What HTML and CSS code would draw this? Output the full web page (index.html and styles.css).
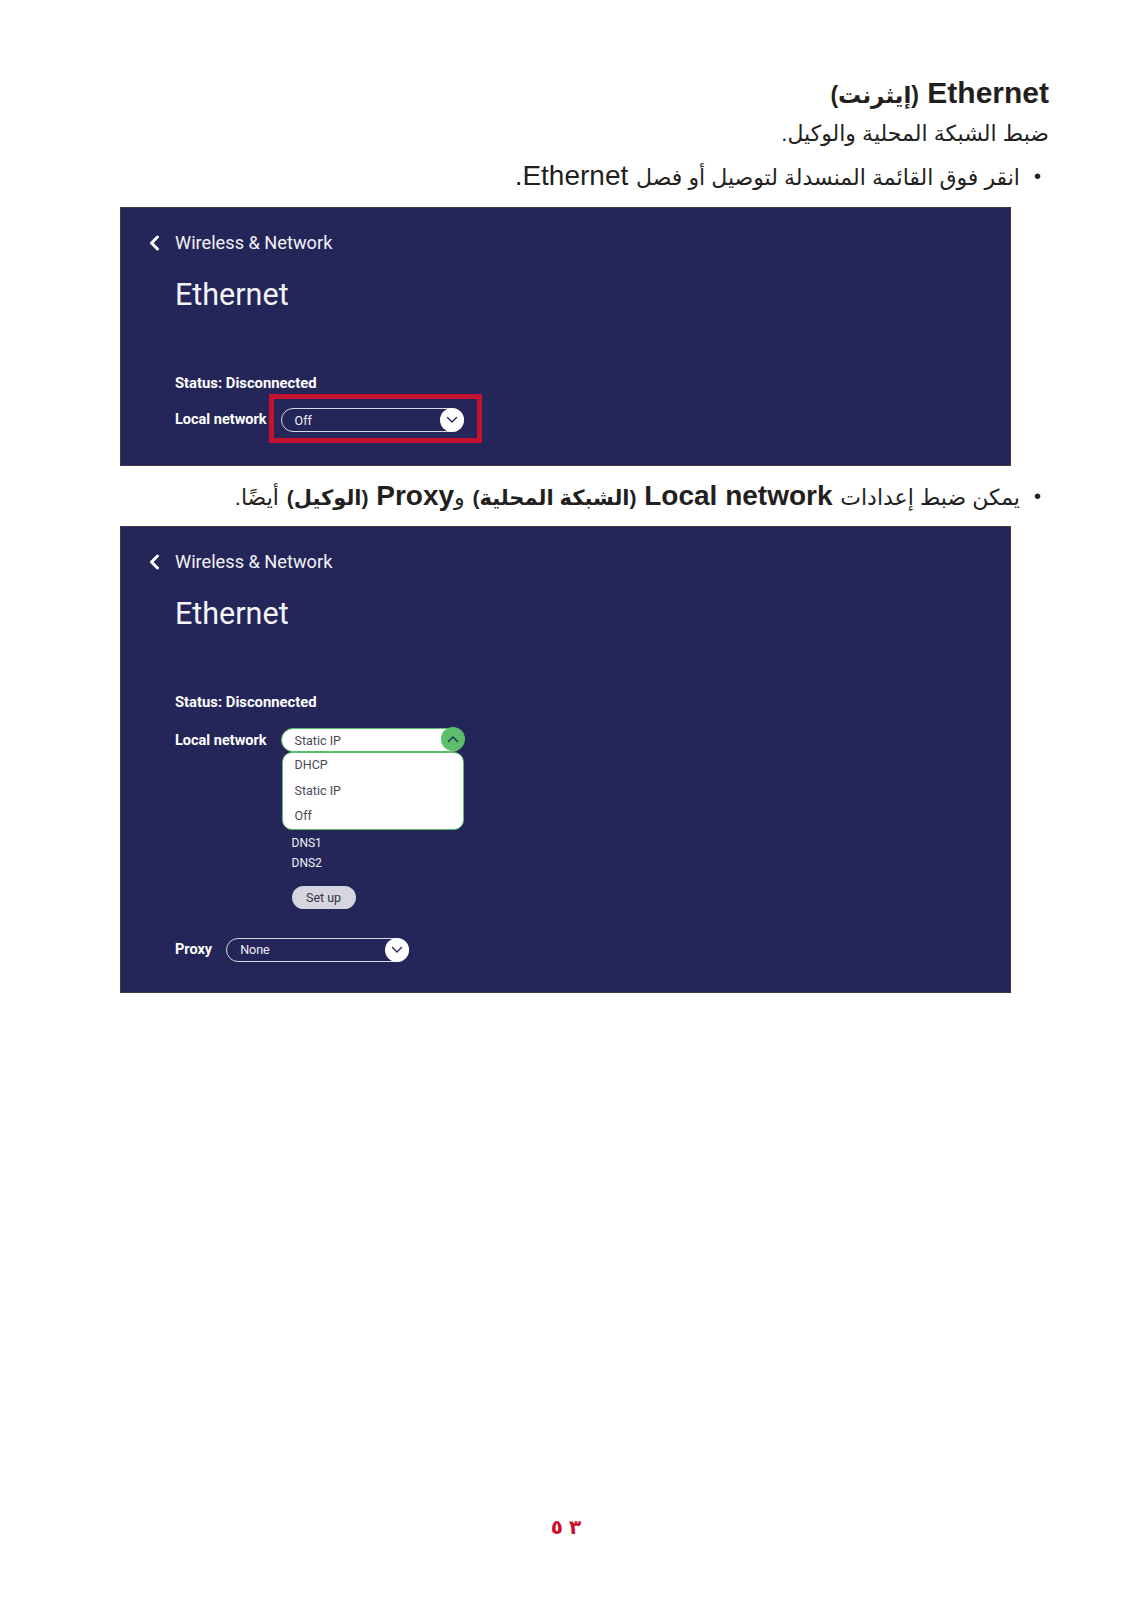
FILE: index.html
```html
<!DOCTYPE html>
<html lang="ar">
<head>
<meta charset="utf-8">
<title>Ethernet</title>
<link rel="stylesheet" href="styles.css">
</head>
<body>
<div class="page">
  <div class="doc" dir="rtl">
    <h1 class="heading">Ethernet <span class="ar-b">(إيثرنت)</span></h1>
    <p class="intro"><span class="ar">ضبط الشبكة المحلية والوكيل.</span></p>
    <div class="bullet"><span class="dot">•</span><span class="txt"><span class="ar">انقر فوق القائمة المنسدلة لتوصيل أو فصل</span> Ethernet.</span></div>
  </div>

  <section class="panel">
    <div class="topbar">
      <svg class="back" width="12" height="16" viewBox="0 0 12 16"><path d="M9.5 2 L3.5 8 L9.5 14" fill="none" stroke="#fff" stroke-width="3" stroke-linecap="round" stroke-linejoin="round"/></svg>
      <span class="crumb">Wireless &amp; Network</span>
    </div>
    <div class="body">
      <div class="title">Ethernet</div>
      <div class="status">Status: Disconnected</div>
      <div class="row">
        <span class="label">Local network</span>
        <div class="select-wrap">
          <div class="select">
            <span class="value">Off</span>
            <span class="knob"><svg width="12" height="8" viewBox="0 0 12 8"><path d="M1.5 1.5 L6 6 L10.5 1.5" fill="none" stroke="#23265a" stroke-width="1.4" stroke-linecap="round" stroke-linejoin="round"/></svg></span>
          </div>
          <div class="highlight"></div>
        </div>
      </div>
    </div>
  </section>

  <div class="doc" dir="rtl">
    <div class="bullet second"><span class="dot">•</span><span class="txt"><span class="ar">يمكن ضبط إعدادات</span> <b>Local network</b> <b class="ar-b">(الشبكة المحلية)</b> <span class="ar">و</span><b>Proxy</b> <b class="ar-b">(الوكيل)</b> <span class="ar">أيضًا.</span></span></div>
  </div>

  <section class="panel tall">
    <div class="topbar">
      <svg class="back" width="12" height="16" viewBox="0 0 12 16"><path d="M9.5 2 L3.5 8 L9.5 14" fill="none" stroke="#fff" stroke-width="3" stroke-linecap="round" stroke-linejoin="round"/></svg>
      <span class="crumb">Wireless &amp; Network</span>
    </div>
    <div class="body">
      <div class="title">Ethernet</div>
      <div class="status">Status: Disconnected</div>
      <div class="row top">
        <span class="label">Local network</span>
        <div class="open-col">
          <div class="select open">
            <span class="value">Static IP</span>
            <span class="knob green"><svg width="12" height="8" viewBox="0 0 12 8"><path d="M1.5 6.5 L6 2 L10.5 6.5" fill="none" stroke="#23265a" stroke-width="1.3" stroke-linecap="round" stroke-linejoin="round"/></svg></span>
          </div>
          <ul class="menu">
            <li>DHCP</li>
            <li>Static IP</li>
            <li>Off</li>
          </ul>
          <div class="dns first">DNS1</div>
          <div class="dns">DNS2</div>
          <div class="setup">Set up</div>
        </div>
      </div>
      <div class="row proxy">
        <span class="label">Proxy</span>
        <div class="select">
          <span class="value">None</span>
          <span class="knob"><svg width="12" height="8" viewBox="0 0 12 8"><path d="M1.5 1.5 L6 6 L10.5 1.5" fill="none" stroke="#23265a" stroke-width="1.4" stroke-linecap="round" stroke-linejoin="round"/></svg></span>
        </div>
      </div>
    </div>
  </section>

  <div class="pagenum" dir="ltr"><span>٥</span><span>٣</span></div>
</div>
</body>
</html>
```

FILE: styles.css
```css
* { box-sizing: border-box; }
html, body { margin: 0; padding: 0; background: #fff; }
body { font-family: "Liberation Sans", "DejaVu Sans", Arial, sans-serif; color: #231f20; }

.page {
  width: 1132px;
  height: 1600px;
  padding-top: 74px;
}

.doc {
  padding-right: 83px;
  padding-left: 83px;
}

.ar, .ar-b { line-height: 1; }

.heading {
  margin: 0;
  height: 38px;
  font-size: 30px;
  line-height: 38px;
  font-weight: bold;
}
.heading .ar-b { font-size: 23px; }

.intro {
  margin: 0;
  height: 40px;
  font-size: 25px;
  line-height: 40px;
}
.intro .ar { font-size: 22px; }

.bullet {
  display: flex;
  align-items: center;
  gap: 14px;
  height: 40px;
  margin-top: 4px;
  margin-right: 8px;
  font-size: 28px;
  line-height: 40px;
}
.bullet .txt { line-height: 40px; }
.bullet .dot { font-size: 20px; line-height: 40px; }
.bullet .ar { font-size: 22px; }
.bullet .ar-b { font-size: 21px; }
.bullet.second { margin-top: 10px; }
.bullet b { font-weight: bold; }

.panel {
  width: 891px;
  margin-left: 120px;
  margin-top: 11px;
  background: #242659;
  border: 1px solid #3b3b45;
  padding: 23px 0 33px 27px;
  font-family: Roboto, "Liberation Sans", sans-serif;
  color: #fff;
}
.panel.tall { margin-top: 10px; padding-bottom: 30px; }

.topbar {
  display: flex;
  align-items: center;
  gap: 15px;
  height: 24px;
}
.back { display: block; }
.crumb { font-size: 18.2px; line-height: 24px; color: #f2f2f7; }

.body { padding-left: 27px; }

.title {
  margin-top: 22px;
  font-size: 30.5px;
  line-height: 36px;
  color: #f4f4f8;
}

.status {
  margin-top: 60px;
  font-size: 14.8px;
  line-height: 20px;
  font-weight: bold;
}

.row {
  display: flex;
  align-items: center;
  gap: 14px;
  margin-top: 15px;
}
.row.top { align-items: flex-start; margin-top: 16px; }
.row.top .label { line-height: 26px; }
.row.proxy { margin-top: 29px; }

.label { font-size: 14.5px; font-weight: bold; line-height: 24px; }

.select-wrap { position: relative; }

.select {
  position: relative;
  width: 183px;
  height: 24px;
  border: 1px solid #d8d8e2;
  border-radius: 12px;
  display: flex;
  align-items: center;
  padding-left: 13px;
}
.value { font-size: 12.5px; color: #f0f0f5; }

.knob {
  position: absolute;
  right: -1px;
  top: -1px;
  width: 24px;
  height: 24px;
  border-radius: 50%;
  background: #fff;
  display: flex;
  align-items: center;
  justify-content: center;
}
.knob.green { background: #5cbd6a; top: -2px; right: -2px; }

.highlight {
  position: absolute;
  left: -12px;
  top: -14px;
  width: 213px;
  height: 49px;
  border: 5px solid #c4122f;
}

.open-col { display: flex; flex-direction: column; }

.select.open {
  background: #fff;
  border: 1.5px solid #5cbd6a;
}
.select.open .value { color: #4a4a55; }

.menu {
  list-style: none;
  margin: 0 0 0 1px;
  padding: 0;
  width: 182px;
  background: #fff;
  border: 1.5px solid #5cbd6a;
  border-radius: 10px;
}
.menu li {
  font-size: 12.5px;
  line-height: 25.5px;
  color: #4a4a55;
  padding-left: 12px;
}
.menu li:first-child { margin-top: -1px; }

.dns {
  font-size: 12px;
  line-height: 20.5px;
  padding-left: 11px;
  color: #f0f0f5;
}
.dns.first { margin-top: 3px; }

.setup {
  margin-top: 12px;
  margin-left: 11px;
  width: 64px;
  height: 23px;
  border-radius: 12px;
  background: #d6d6e0;
  color: #333340;
  font-size: 12.5px;
  line-height: 23px;
  text-align: center;
}

.pagenum {
  margin-top: 519px;
  display: flex;
  justify-content: center;
  gap: 6px;
  font-size: 20px;
  line-height: 30px;
  font-weight: bold;
  color: #c8102e;
}
```
